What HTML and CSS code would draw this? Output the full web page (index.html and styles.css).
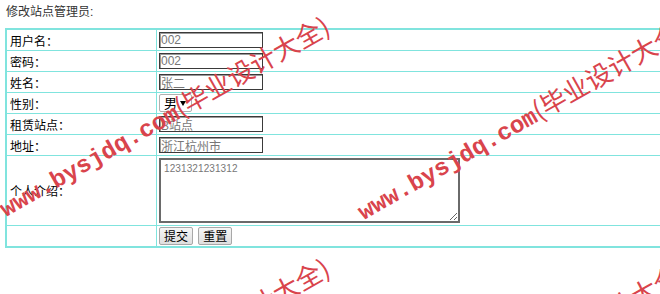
FILE: index.html
```html
<!DOCTYPE html>
<html lang="zh-CN">
<head>
    <meta charset="UTF-8">
    <title>修改站点管理员</title>
    <link rel="stylesheet" href="styles.css">
</head>
<body>
    <div class="page-title">修改站点管理员:</div>
    <form class="edit-form">
        <table class="form-table">
            <tr>
                <td class="label">用户名：</td>
                <td><input class="text-input" type="text" value="002"></td>
            </tr>
            <tr>
                <td class="label">密码：</td>
                <td><input class="text-input" type="text" value="002"></td>
            </tr>
            <tr>
                <td class="label">姓名：</td>
                <td><input class="text-input" type="text" value="张二"></td>
            </tr>
            <tr>
                <td class="label">性别：</td>
                <td>
                    <span class="select-wrap">
                        <select class="sex-select">
                            <option>男</option>
                            <option>女</option>
                        </select>
                    </span>
                </td>
            </tr>
            <tr>
                <td class="label">租赁站点：</td>
                <td><input class="text-input" type="text" value="B站点"></td>
            </tr>
            <tr>
                <td class="label">地址：</td>
                <td><input class="text-input" type="text" value="浙江杭州市"></td>
            </tr>
            <tr class="tall-row">
                <td class="label">个人介绍：</td>
                <td><textarea class="intro">1231321231312</textarea></td>
            </tr>
            <tr>
                <td></td>
                <td>
                    <button type="button" class="btn">提交</button>
                    <button type="reset" class="btn">重置</button>
                </td>
            </tr>
        </table>
    </form>

    <!-- 水印 -->
    <div class="mark mark-a">www.bysjdq.com<span class="mark-cn">(毕业设计大全)</span></div>
    <div class="mark mark-b">www.bysjdq.com<span class="mark-cn">(毕业设计大全)</span></div>
    <div class="mark mark-c">www.bysjdq.com<span class="mark-cn">(毕业设计大全)</span></div>
    <div class="mark mark-d">www.bysjdq.com<span class="mark-cn">(毕业设计大全)</span></div>
</body>
</html>
```

FILE: styles.css
```css
/* 基本样式 */
html {
    overflow: hidden;
}

body {
    margin: 0;
    padding: 4px 5px 0;
    font-family: "Liberation Sans", "Noto Sans CJK SC", sans-serif;
    font-size: 12px;
    color: #000;
    background: #fff;
    position: relative;
    height: 290px;
    overflow: hidden;
}

.page-title {
    height: 16px;
    line-height: 16px;
    padding-left: 1px;
    color: #333;
    margin-bottom: 8px;
}

.form-table {
    width: 760px;
    border-collapse: collapse;
    border: 2px solid #80e4de;
}

.form-table td {
    border: 1px solid #80e4de;
    height: 20px;
    padding: 0 0 0 2px;
    vertical-align: middle;
}

.form-table td.label {
    width: 146px;
    padding-left: 3px;
}

.tall-row td {
    height: 69px;
}

.text-input {
    box-sizing: border-box;
    width: 104px;
    height: 16px;
    margin: 0;
    padding: 0 1px;
    border: 1px solid #3a3a3a;
    box-shadow: inset 1px 1px 0 #9a9a9a;
    font-family: "Liberation Sans", "Noto Sans CJK SC", sans-serif;
    font-size: 12px;
    color: #777;
    vertical-align: middle;
}

.select-wrap {
    position: relative;
    display: inline-block;
    vertical-align: middle;
}

.sex-select {
    appearance: none;
    box-sizing: border-box;
    width: 33px;
    height: 18px;
    margin: 0;
    padding: 0 0 0 4px;
    border: 1px solid #b0b0b0;
    border-radius: 2px;
    background: #fff;
    font-family: "Noto Sans CJK SC", sans-serif;
    font-size: 13px;
    line-height: 16px;
    color: #000;
}

/* 下拉箭头 */
.select-wrap::after {
    content: "";
    position: absolute;
    right: 6px;
    top: 7px;
    border-left: 3px solid transparent;
    border-right: 3px solid transparent;
    border-top: 5px solid #000;
    pointer-events: none;
}

.intro {
    box-sizing: border-box;
    display: block;
    width: 301px;
    height: 65px;
    margin: 0;
    padding: 3px 3px;
    border: 2px solid #6a6a6a;
    font-family: "Liberation Sans", sans-serif;
    font-size: 10px;
    letter-spacing: 0.1px;
    color: #777;
    resize: both;
}

.btn {
    box-sizing: border-box;
    height: 18px;
    margin: 0 2px 0 0;
    padding: 0 4px;
    border: 1px solid #a8a8a8;
    border-radius: 2px;
    background: linear-gradient(#f6f6f6, #dedede);
    font-family: "Noto Sans CJK SC", sans-serif;
    font-size: 12px;
    line-height: 16px;
    color: #000;
    vertical-align: middle;
}

/* 水印 */
.mark {
    position: absolute;
    height: 24px;
    line-height: 24px;
    white-space: nowrap;
    transform-origin: 0 100%;
    transform: rotate(-29.5deg);
    font-family: "Liberation Mono", monospace;
    font-weight: bold;
    font-size: 24px;
    color: #d9444c;
    pointer-events: none;
}

.mark-cn {
    font-family: "Noto Sans CJK SC", sans-serif;
    font-weight: normal;
    font-size: 26px;
}

.mark-a {
    left: 6px;
    top: 194px;
}

.mark-b {
    left: 364px;
    top: 197px;
}

.mark-c {
    left: 6px;
    top: 436px;
}

.mark-d {
    left: 364px;
    top: 439px;
}
```
